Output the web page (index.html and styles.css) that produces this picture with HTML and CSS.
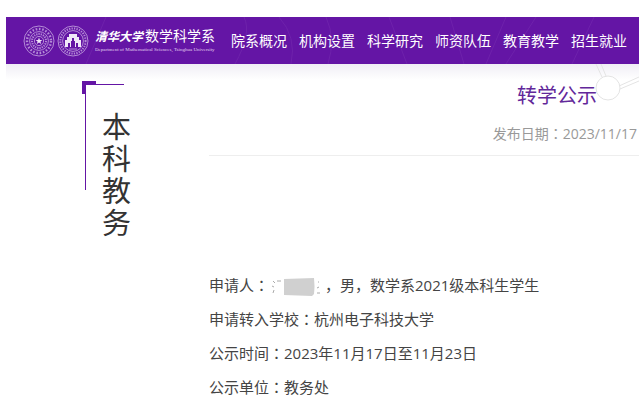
FILE: index.html
```html
<!DOCTYPE html>
<html lang="zh-CN">
<head>
    <meta charset="UTF-8">
    <meta name="viewport" content="width=device-width, initial-scale=1">
    <title>转学公示</title>
    <link rel="stylesheet" href="styles.css">
</head>
<body>
    <header class="header">
        <svg class="header-lines" viewBox="0 0 633 47" preserveAspectRatio="none" aria-hidden="true">
            <path d="M100 0l-20 47M238 0q8 16-9 47M273 0q18 20 12 47M320 0q10 22 2 47M383 0l18 47M444 0l14 47M500 0l-20 47M530 0l-30 47M588 0l-22 47"/>
        </svg>
        <a href="#" class="logo">
            <svg class="seal" viewBox="0 0 32 32" aria-hidden="true">
                <circle cx="16" cy="16" r="15"/>
                <circle cx="16" cy="16" r="12" stroke-width="2.4" stroke-dasharray="1.6 1.7"/>
                <circle cx="16" cy="16" r="9.4"/>
                <circle cx="16" cy="16" r="7" stroke-width="2" stroke-dasharray="1.3 1"/>
                <circle cx="16" cy="16" r="4.6"/>
                <path class="fill" d="M16 12.6l.9 2.4h2.5l-2 1.5.8 2.4-2.2-1.5-2.2 1.5.8-2.4-2-1.5h2.500z"/>
            </svg>
            <svg class="seal" viewBox="0 0 32 32" aria-hidden="true">
                <circle cx="16" cy="16" r="15"/>
                <circle cx="16" cy="16" r="12.6" stroke-width="2" stroke-dasharray="1.3 1.2"/>
                <circle cx="16" cy="16" r="10.4"/>
                <path class="fill" d="M12 9h8v3h2v3h2v7h-3v-4h-2v4h-1v-6h-1v-3h-2v3h-1v6h-1v-4h-2v4H8v-7h2v-3h2z"/>
                <path d="M12 24h8" stroke-width="1"/>
            </svg>
            <span class="logo-text">
                <span class="logo-name"><i class="script">清华大学</i>数学科学系</span>
                <span class="logo-en">Department of Mathematical Sciences, Tsinghua University</span>
            </span>
        </a>
        <nav class="nav">
            <a href="#">院系概况</a>
            <a href="#">机构设置</a>
            <a href="#">科学研究</a>
            <a href="#">师资队伍</a>
            <a href="#">教育教学</a>
            <a href="#">招生就业</a>
            <a href="#">党</a>
        </nav>
    </header>

    <main class="main">
        <svg class="network" viewBox="0 0 50 50" aria-hidden="true">
            <path d="M7 0l6 13M12 0l5 12M30 22l20-9M31 25l19-8"/>
            <circle cx="19" cy="24" r="12"/>
        </svg>
        <aside class="side">
            <div class="side-box">
                <h2 class="side-title">本科教务</h2>
            </div>
        </aside>
        <article class="article">
            <div class="article-head">
                <h1>转学公示</h1>
                <p class="date">发布日期<span class="colon" lang="ja">：</span>2023/11/17</p>
            </div>
            <div class="content">
                <p>申请人<span class="colon" lang="ja">：</span><svg class="masked" viewBox="0 0 52 20" role="img" aria-label="姓名已隐去"><path class="stroke" d="M2 4l2 2M1 9l2 1M2 16l1-3M6 4h4M47 5h1M46 11l2-1M46 16h3"/><path class="block" d="M13 2l30-1q1 9 0 16l-2 2-28-1z"/></svg>，男，数学系2021级本科生学生</p>
                <p>申请转入学校<span class="colon" lang="ja">：</span>杭州电子科技大学</p>
                <p>公示时间<span class="colon" lang="ja">：</span>2023年11月17日至11月23日</p>
                <p>公示单位<span class="colon" lang="ja">：</span>教务处</p>
            </div>
        </article>
    </main>
</body>
</html>
```

FILE: styles.css
```css
:root {
    --purple: #6415a5;
    --text: #444;
}

* {
    box-sizing: border-box;
}

body {
    margin: 0;
    padding: 17px 0 0 6px;
    font-family: "Open Sans", "Noto Sans CJK SC", sans-serif;
    color: var(--text);
    background: #fff;
    overflow-x: hidden;
}

a {
    color: inherit;
    text-decoration: none;
}

h1, h2, p {
    margin: 0;
    font-weight: 400;
}

.colon {
    font-family: "Noto Sans CJK JP", sans-serif;
}

.header {
    position: relative;
    display: flex;
    align-items: center;
    gap: 20px;
    height: 47px;
    padding-left: 17px;
    color: #fff;
    background: var(--purple);
    overflow: hidden;
}

.header-lines {
    position: absolute;
    inset: 0;
    width: 100%;
    height: 100%;
    fill: none;
    stroke: #6e22ab;
}

.logo {
    position: relative;
    display: flex;
    flex: none;
    align-items: center;
    gap: 2px;
}

.seal {
    width: 32px;
    height: 32px;
    fill: none;
    stroke: #b48bd6;
    stroke-width: 1;
}

.seal .fill {
    fill: #f1e8f8;
    stroke: none;
}

.logo-text {
    display: flex;
    flex-direction: column;
    width: 120px;
    padding-left: 4px;
    white-space: nowrap;
}

.logo-name {
    font-size: 14px;
    line-height: 18px;
}

.script {
    margin-right: 2px;
    font-size: 12px;
    font-weight: 700;
}

.logo-en {
    font-family: "Liberation Serif", serif;
    font-size: 5px;
    line-height: 8px;
    color: #e0cdef;
}

.nav {
    position: relative;
    display: flex;
    gap: 12px;
    font-size: 14px;
    line-height: 20px;
    white-space: nowrap;
}

.main {
    position: relative;
    display: flex;
    padding-top: 17px;
    background: linear-gradient(#f0eef5, #fff 16px);
}

.network {
    position: absolute;
    top: 0;
    right: 0;
    width: 50px;
    height: 50px;
    fill: none;
    stroke: #e4e4e4;
}

.network circle {
    fill: #fff;
}

.side {
    flex: none;
    width: 203px;
    padding-left: 76px;
}

.side-box {
    width: 42px;
    height: 109px;
    padding: 30px 0 0 20px;
    background:
        linear-gradient(var(--purple), var(--purple)) 0 0 / 14px 4px no-repeat,
        linear-gradient(var(--purple), var(--purple)) 0 0 / 4px 13px no-repeat,
        linear-gradient(var(--purple), var(--purple)) 3px 3px / 39px 1px no-repeat,
        linear-gradient(var(--purple), var(--purple)) 3px 3px / 1px 106px no-repeat;
}

.side-title {
    width: 30px;
    font-size: 29px;
    line-height: 32px;
    color: #333;
}

.article {
    position: relative;
    flex: 1;
    min-width: 0;
}

.article-head {
    display: flex;
    flex-direction: column;
    gap: 12px;
    height: 75px;
    padding-right: 2px;
    border-bottom: 1px solid #eee;
    text-align: right;
}

.article-head h1 {
    padding-right: 40px;
    font-size: 20px;
    line-height: 30px;
    color: #62289a;
}

.date {
    font-size: 14px;
    line-height: 20px;
    color: #999;
}

.content {
    padding-top: 112px;
    font-size: 15px;
    line-height: 34px;
    white-space: nowrap;
}

.masked {
    width: 56px;
    height: 20px;
    vertical-align: middle;
}

.masked .stroke {
    fill: none;
    stroke: #aaa;
}

.masked .block {
    fill: #d0d0d0;
}
```
